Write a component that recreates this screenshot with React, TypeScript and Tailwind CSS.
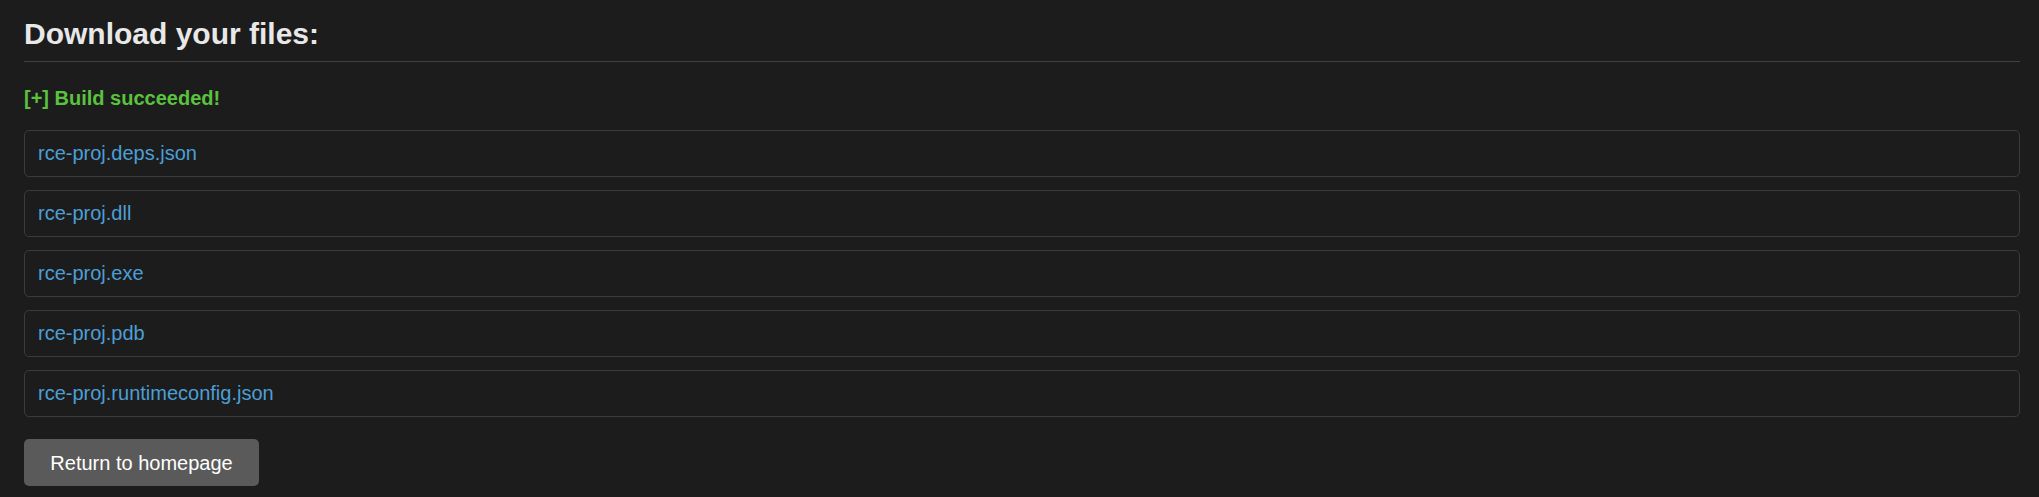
import React from "react";

const files = [
  "rce-proj.deps.json",
  "rce-proj.dll",
  "rce-proj.exe",
  "rce-proj.pdb",
  "rce-proj.runtimeconfig.json",
];

export default function App() {
  return (
    <div
      className="min-h-screen bg-[#1c1c1c] pl-[24px] pr-[19px] pt-[16px] pb-[10px]"
      style={{ fontFamily: '"Liberation Sans", Arial, Helvetica, sans-serif' }}
    >
      <h2 className="text-[30px] font-bold leading-[36px] text-[#e8e8e8] pb-[9px] border-b border-[#404040]">
        Download your files:
      </h2>
      <p className="mt-[24px] text-[20px] font-bold leading-[24px] text-[#5bc23e]">
        [+] Build succeeded!
      </p>
      <div className="mt-[20px] flex flex-col gap-[13px]">
        {files.map((f) => (
          <div
            key={f}
            className="border border-[#3b3b3b] rounded-[5px] pl-[13px] pt-[10px] pb-[11px] bg-[#1c1c1c] text-[20px] leading-[24px]"
          >
            <a href="#" className="block text-[20px] leading-[24px] text-[#4c9fd6]">
              {f}
            </a>
          </div>
        ))}
      </div>
      <button className="mt-[22px] w-[235px] h-[47px] rounded-[5px] bg-[#5a5a5a] text-white text-[20px] leading-[24px] flex items-center justify-center">
        Return to homepage
      </button>
    </div>
  );
}
